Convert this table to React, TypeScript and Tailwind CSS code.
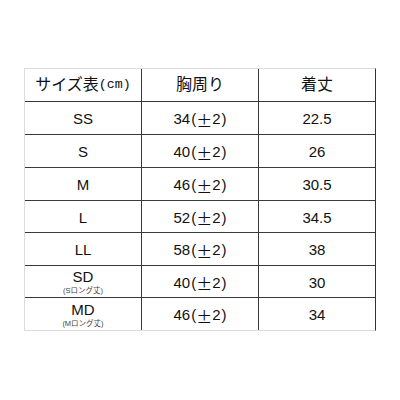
import React from "react";

const rows: { size: string; sub?: string; chest: string; len: string; h: string }[] = [
  { size: "SS", chest: "34", len: "22.5", h: "h-[33px]" },
  { size: "S", chest: "40", len: "26", h: "h-[33px]" },
  { size: "M", chest: "46", len: "30.5", h: "h-[33px]" },
  { size: "L", chest: "52", len: "34.5", h: "h-[32px]" },
  { size: "LL", chest: "58", len: "38", h: "h-[33px]" },
  { size: "SD", sub: "(Sロング丈)", chest: "40", len: "30", h: "h-[32px]" },
  { size: "MD", sub: "(Mロング丈)", chest: "46", len: "34", h: "h-[32px]" },
];

const font = "font-['Liberation_Sans','Noto_Sans_CJK_JP',sans-serif]";

function Chest({ v }: { v: string }) {
  return (
    <span className="flex items-center">
      <span>{v}</span>
      <span className="ml-[1px]">(</span>
      <span className="inline-block w-[16px] text-center font-['Noto_Sans_CJK_JP',sans-serif] text-[16px] leading-none">±</span>
      <span>2</span>
      <span className="ml-[1px]">)</span>
    </span>
  );
}

export default function App() {
  return (
    <div className={`w-[400px] h-[400px] bg-white pt-[68px] ${font} text-[#111]`}>
      <div className="ml-[24px] w-[352px] border-t border-l border-b border-[#dcdcdc] border-r border-r-[#333]">
        <div className="flex h-[33px] border-b border-[#3a3a3a] text-[16px]">
          <div className="w-[117px] border-r border-[#3a3a3a] flex items-center justify-center">
            サイズ表<span className="font-['Liberation_Mono',monospace] text-[13.3px]">(cm)</span>
          </div>
          <div className="w-[117px] border-r border-[#3a3a3a] flex items-center justify-center">胸周り</div>
          <div className="flex-1 flex items-center justify-center">着丈</div>
        </div>
        {rows.map((r, i) => (
          <div
            key={r.size}
            className={`flex ${r.h} text-[15px] ${i < rows.length - 1 ? "border-b border-[#3a3a3a]" : ""}`}
          >
            <div className="w-[117px] border-r border-[#3a3a3a] flex flex-col items-center justify-center">
              {r.sub ? (
                <>
                  <span className="leading-[14px] text-[15px] mt-[2px]">{r.size}</span>
                  <span className="leading-[9px] text-[7.5px] text-[#444] mt-[2px]">{r.sub}</span>
                </>
              ) : (
                <span className="pt-[3px]">{r.size}</span>
              )}
            </div>
            <div className="w-[117px] border-r border-[#3a3a3a] flex items-center justify-center pt-[3px]">
              <Chest v={r.chest} />
            </div>
            <div className="flex-1 flex items-center justify-center pt-[3px]">{r.len}</div>
          </div>
        ))}
      </div>
    </div>
  );
}
